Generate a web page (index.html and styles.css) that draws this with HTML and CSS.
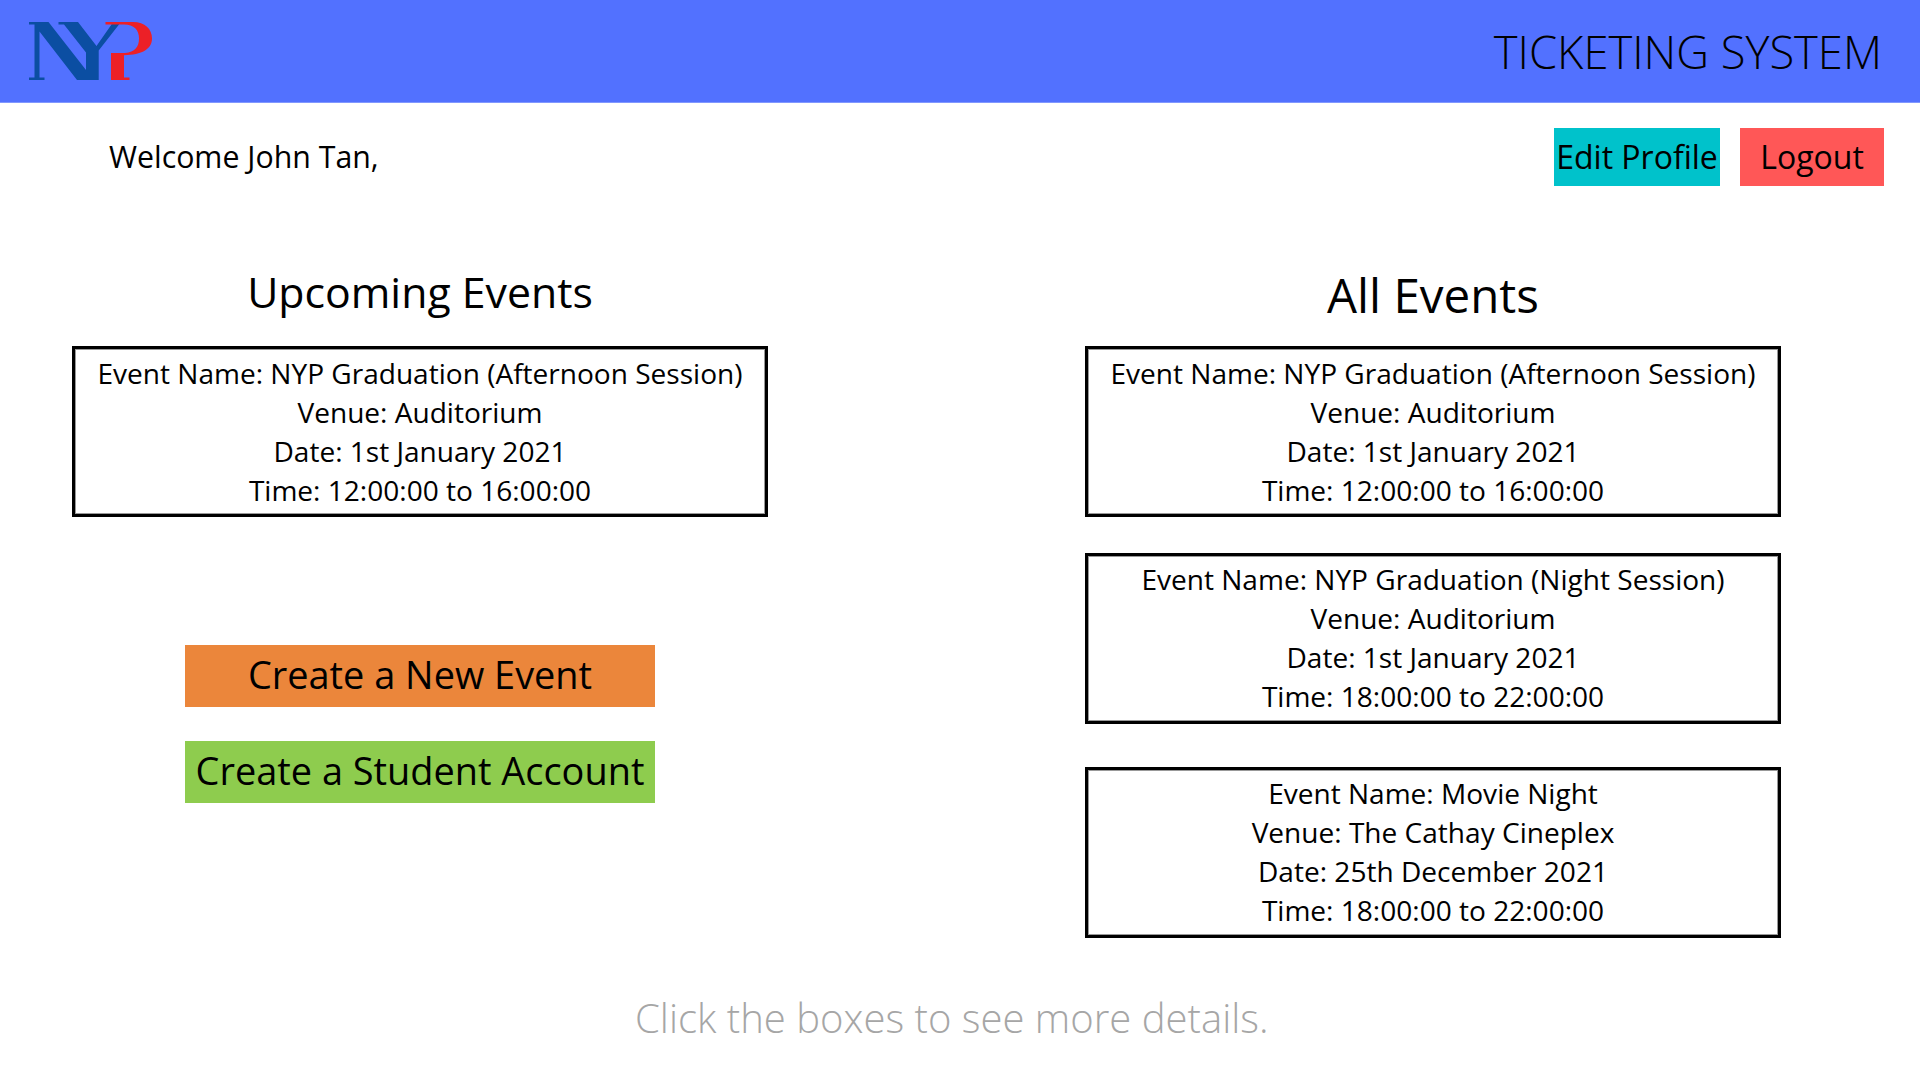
FILE: index.html
```html
<!DOCTYPE html>
<html lang="en">
<head>
<meta charset="utf-8">
<title>Ticketing System</title>
<link rel="stylesheet" href="styles.css">
</head>
<body>
<header class="topbar">
  <svg class="logo" width="124" height="60" viewBox="0 0 124 60" role="img" aria-label="NYP">
    <path class="logo-blue" d="M0 0H19.500L57 48V30.500L35 2.500H29.500V0H49L67.500 24L82.500 2.500V1H90V2.500L69.700 28.500V58H48L10.500 9.500V55.500H15.500V58H0V55.500H5.500V2.500H0Z"/>
    <path class="logo-red" d="M76.500 0H104C116 0 123 7 123 16.500C123 27 113 33 95 33.200V55.500H100.500V58H82V31H96C106 30 110 25 110 16.500C110 8 105 2.500 95 2.500H76.500Z"/>
  </svg>
  <h1 class="title">TICKETING SYSTEM</h1>
</header>

<div class="userbar">
  <p class="welcome">Welcome John Tan,</p>
  <nav class="actions">
    <button class="btn btn-profile">Edit Profile</button>
    <button class="btn btn-logout">Logout</button>
  </nav>
</div>

<main class="columns">
  <section class="column">
    <h2 class="heading heading-upcoming">Upcoming Events</h2>
    <article class="event event-afternoon">
      <p>Event Name: NYP Graduation (Afternoon Session)</p>
      <p>Venue: Auditorium</p>
      <p>Date: 1st January 2021</p>
      <p>Time: 12:00:00 to 16:00:00</p>
    </article>
    <div class="create">
      <button class="btn btn-event">Create a New Event</button>
      <button class="btn btn-student">Create a Student Account</button>
    </div>
  </section>
  <section class="column">
    <h2 class="heading heading-all">All Events</h2>
    <article class="event event-afternoon">
      <p>Event Name: NYP Graduation (Afternoon Session)</p>
      <p>Venue: Auditorium</p>
      <p>Date: 1st January 2021</p>
      <p>Time: 12:00:00 to 16:00:00</p>
    </article>
    <article class="event event-night">
      <p>Event Name: NYP Graduation (Night Session)</p>
      <p>Venue: Auditorium</p>
      <p>Date: 1st January 2021</p>
      <p>Time: 18:00:00 to 22:00:00</p>
    </article>
    <article class="event event-movie">
      <p>Event Name: Movie Night</p>
      <p>Venue: The Cathay Cineplex</p>
      <p>Date: 25th December 2021</p>
      <p>Time: 18:00:00 to 22:00:00</p>
    </article>
  </section>
</main>

<footer class="hint">Click the boxes to see more details.</footer>
</body>
</html>
```
FILE: styles.css
```css
* {
  box-sizing: border-box;
  margin: 0;
  padding: 0;
}

body {
  width: 1920px;
  height: 1080px;
  overflow: hidden;
  display: flex;
  flex-direction: column;
  background: #fff;
  color: #000;
  font-family: "Open Sans", "Noto Sans", sans-serif;
}

.topbar {
  flex: none;
  display: flex;
  justify-content: space-between;
  align-items: flex-start;
  height: 103px;
  padding: 22px 38px 0 29px;
  background: #5271ff;
  border-bottom: 1px solid #8198ff;
}

.logo {
  overflow: visible;
}

.logo-blue {
  fill: #0b4ea2;
}

.logo-red {
  fill: #ec2027;
}

.title {
  font-size: 45.3px;
  font-weight: 300;
  line-height: 60px;
}

.userbar {
  flex: none;
  display: flex;
  justify-content: space-between;
  align-items: flex-start;
  height: 155px;
  padding: 25px 36px 0 109px;
}

.welcome {
  font-size: 30.3px;
  line-height: 58px;
}

.actions {
  display: flex;
  gap: 20px;
}

.btn {
  border: 0;
  color: #000;
  font-family: inherit;
  white-space: nowrap;
}

.btn-profile,
.btn-logout {
  height: 58px;
  font-size: 32px;
  line-height: 58px;
}

.btn-profile {
  width: 166px;
  background: #00c2cb;
}

.btn-logout {
  width: 144px;
  background: #ff5757;
}

.columns {
  flex: none;
  display: grid;
  grid-template-columns: 696px 696px;
  column-gap: 317px;
  height: 700px;
  padding-left: 72px;
}

.column {
  text-align: center;
}

.heading {
  height: 88px;
  font-weight: 400;
}

.heading-upcoming {
  font-size: 42.8px;
  line-height: 67px;
}

.heading-all {
  font-size: 47.5px;
  line-height: 73px;
}

.event {
  height: 171px;
  padding-top: 4px;
  border: 3px solid #000;
  box-shadow: inset 0 0 0 1px rgba(0, 0, 0, 0.4);
  font-size: 28.05px;
  line-height: 39px;
}

.event-afternoon {
  padding-top: 5px;
}

.event-night {
  margin-top: 36px;
}

.event-movie {
  margin-top: 43px;
}

.create {
  display: flex;
  flex-direction: column;
  align-items: center;
  gap: 34px;
  margin-top: 128px;
}

.btn-event,
.btn-student {
  width: 470px;
  height: 62px;
  padding-bottom: 3px;
  font-size: 37.9px;
  line-height: 59px;
}

.btn-event {
  background: #eb863b;
}

.btn-student {
  background: #8ecc4e;
}

.hint {
  padding-left: 635px;
  padding-top: 26px;
  color: #a6a6a6;
  font-size: 40.05px;
  font-weight: 300;
  line-height: 68px;
}
```
